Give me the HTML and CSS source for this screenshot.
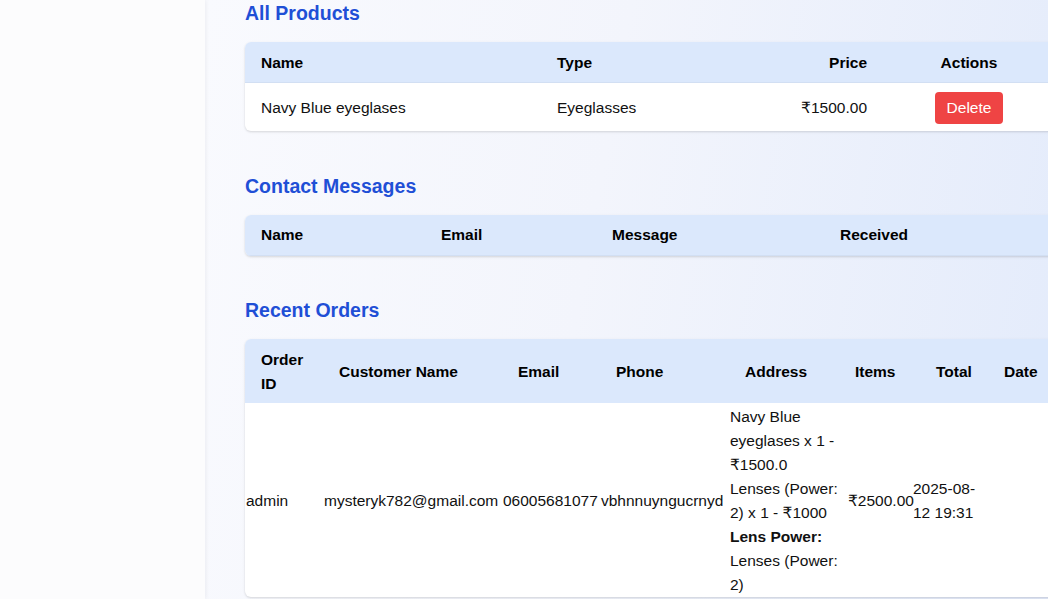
FILE: index.html
```html
<!DOCTYPE html>
<html lang="en">
<head>
<meta charset="utf-8">
<title>Admin Dashboard</title>
<link rel="stylesheet" href="styles.css">
</head>
<body>
<div class="layout">
  <aside class="sidebar"></aside>
  <main class="main">
    <section class="section section-first">
      <h2 class="section-title">All Products</h2>
      <div class="card card-products">
        <table class="table">
          <colgroup>
            <col class="w-296"><col class="w-196"><col class="w-146"><col class="w-172">
          </colgroup>
          <thead>
            <tr><th>Name</th><th>Type</th><th class="num">Price</th><th class="center">Actions</th></tr>
          </thead>
          <tbody>
            <tr class="row-padded">
              <td>Navy Blue eyeglases</td>
              <td>Eyeglasses</td>
              <td class="num">₹1500.00</td>
              <td class="center"><button class="btn-delete" type="button">Delete</button></td>
            </tr>
          </tbody>
        </table>
      </div>
    </section>

    <section class="section">
      <h2 class="section-title">Contact Messages</h2>
      <div class="card card-contact">
        <table class="table table-contact">
          <colgroup>
            <col class="w-180"><col class="w-171"><col class="w-228"><col>
          </colgroup>
          <thead>
            <tr><th>Name</th><th>Email</th><th>Message</th><th>Received</th></tr>
          </thead>
          <tbody></tbody>
        </table>
      </div>
    </section>

    <section class="section">
      <h2 class="section-title">Recent Orders</h2>
      <div class="card card-orders">
        <table class="table table-orders">
          <colgroup>
            <col class="w-78"><col class="w-179"><col class="w-98"><col class="w-129"><col class="w-118"><col class="w-65"><col class="w-76"><col>
          </colgroup>
          <thead>
            <tr>
              <th>Order ID</th><th>Customer Name</th><th>Email</th><th>Phone</th><th>Address</th><th class="th-tight">Items</th><th class="th-wide">Total</th><th>Date</th>
            </tr>
          </thead>
          <tbody>
            <tr>
              <td>admin</td>
              <td>mysteryk782@gmail.com</td>
              <td>06005681077</td>
              <td>vbhnnuyngucrnyd</td>
              <td>Navy Blue eyeglases x 1 - ₹1500.0<br>Lenses (Power: 2) x 1 - ₹1000<br><strong>Lens Power:</strong><br>Lenses (Power: 2)</td>
              <td class="nowrap">₹2500.00</td>
              <td>2025-08-12 19:31</td>
              <td></td>
            </tr>
          </tbody>
        </table>
      </div>
    </section>
  </main>
</div>
</body>
</html>
```

FILE: styles.css
```css
* { box-sizing: border-box; }

html, body {
  margin: 0;
  height: 100%;
  overflow: hidden;
}

body {
  font-family: "Liberation Sans", Arial, "DejaVu Sans", sans-serif;
  font-size: 15.5px;
  line-height: 24px;
  color: #111;
  background: #ffffff;
}

.layout {
  display: grid;
  grid-template-columns: 205px 1fr;
  height: 100vh;
}

.sidebar {
  background: #fcfcfd;
  box-shadow: 1px 0 4px rgba(15, 23, 42, 0.06);
  position: relative;
  z-index: 1;
}

.main {
  min-width: 0;
  overflow: hidden;
  padding: 0 0 0 40px;
  background: linear-gradient(100deg, #f9fafe 0%, #f3f5fc 45%, #e3ebfb 100%);
}

.section {
  margin-bottom: 40px;
}

.section-first {
  margin-bottom: 41px;
}

.section-first .section-title {
  margin-top: -1px;
}

.section-title {
  margin: 0 0 15px;
  font-size: 19.5px;
  line-height: 28px;
  font-weight: 700;
  color: #1f4fd6;
}

.card {
  background: #ffffff;
  border-radius: 6px;
  box-shadow: 0 1px 3px rgba(0, 0, 0, 0.10), 0 1px 2px rgba(0, 0, 0, 0.05);
  overflow: hidden;
}

.card-products { width: 810px; }
.card-contact { width: 860px; }
.card-orders { width: 900px; }

.table {
  width: 100%;
  border-collapse: collapse;
  table-layout: fixed;
}

.table th {
  background: #dbe8fc;
  padding: 9px 16px 7px;
  text-align: left;
  font-weight: 700;
  color: #000;
  border-bottom: 1px solid #d2dff3;
  vertical-align: middle;
}

.table-contact th {
  padding-top: 8px;
  padding-bottom: 8px;
}

.table td {
  vertical-align: middle;
}

.row-padded td {
  padding: 9px 16px 7px;
}

.table-orders th {
  border-bottom: 0;
  padding-top: 9px;
  padding-bottom: 7px;
}

.table-orders td {
  padding: 2px 1px 0;
}

.table .th-tight { padding-left: 8px; }
.table .th-wide { padding-left: 24px; }

.num { text-align: right; }
.table th.num { text-align: right; }
.center { text-align: center; }
.table th.center { text-align: center; }
.nowrap { white-space: nowrap; }

.w-296 { width: 296px; }
.w-196 { width: 196px; }
.w-146 { width: 146px; }
.w-172 { width: 172px; }
.w-180 { width: 180px; }
.w-171 { width: 171px; }
.w-228 { width: 228px; }
.w-78 { width: 78px; }
.w-179 { width: 179px; }
.w-98 { width: 98px; }
.w-129 { width: 129px; }
.w-118 { width: 118px; }
.w-65 { width: 65px; }
.w-76 { width: 76px; }

.btn-delete {
  font-family: inherit;
  font-size: 15.5px;
  line-height: 24px;
  background: #ef4444;
  color: #ffffff;
  border: 0;
  border-radius: 4px;
  padding: 4px 12px;
  cursor: pointer;
}
```
